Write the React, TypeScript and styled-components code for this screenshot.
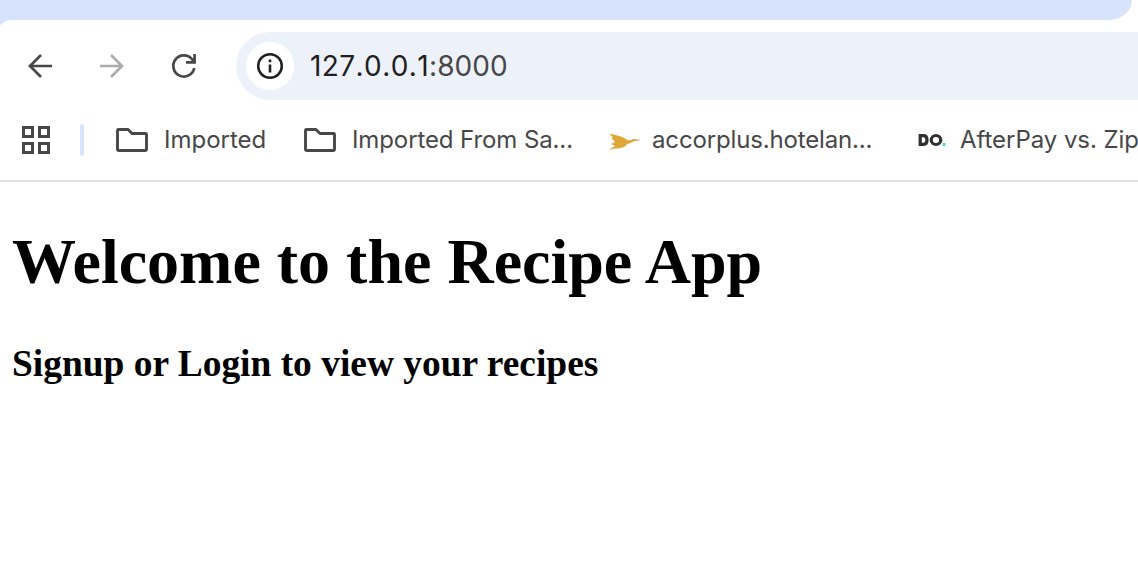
import React from "react";
import styled, { createGlobalStyle } from "styled-components";

const GlobalStyle = createGlobalStyle`
  * { box-sizing: border-box; }
  body { margin: 0; background: #fff; overflow: hidden; }
  svg { flex: none; }
`;

const Window = styled.div`
  width: 1138px;
  height: 580px;
  overflow: hidden;
  background: #fff;
`;

const TabStrip = styled.div`
  width: 1132px;
  height: 20px;
  background: #d7e2fb;
  border-bottom-right-radius: 24px 20px;
`;

const StripBase = styled.div`
  background: linear-gradient(to right, #d7e2fb 40px, #fff 40px);
`;

const Chrome = styled.div`
  height: 162px;
  margin-left: -4px;
  padding: 12px 0 0 4px;
  background: #fff;
  border-top-left-radius: 16px;
  border-bottom: 2px solid #e1e1e1;
`;

const Toolbar = styled.div`
  display: flex;
  align-items: center;
  height: 68px;
  padding-left: 22px;
`;

const NavButton = styled.button<{ $muted?: boolean }>`
  display: flex;
  width: 36px;
  height: 36px;
  margin-right: 36px;
  padding: 0;
  border: 0;
  background: none;
  color: ${(p) => (p.$muted ? "#ababab" : "#474747")};
`;

const AddressBar = styled.div`
  display: flex;
  align-items: center;
  flex: 1;
  height: 68px;
  margin-left: -2px;
  padding-left: 10px;
  border-radius: 34px 0 0 34px;
  background: #edf2fa;
`;

const SiteInfo = styled.div`
  display: flex;
  width: 48px;
  height: 48px;
  margin-right: 16px;
  border-radius: 50%;
  background: #fff;
`;

const Url = styled.span`
  font: 400 28px/34px Inter, "Liberation Sans", sans-serif;
  font-kerning: none;
  font-feature-settings: "calt" 0;
  letter-spacing: 0.42px;
  color: #1f1f1f;
  white-space: nowrap;
`;

const Port = styled.span`
  letter-spacing: 0.05px;
  color: #474747;
`;

const Bookmarks = styled.div`
  display: flex;
  align-items: center;
  height: 80px;
  padding-left: 20px;
`;

const Divider = styled.div`
  flex: none;
  width: 4px;
  height: 32px;
  margin: 0 32px 0 28px;
  border-radius: 2px;
  background: #d7e2fb;
`;

const Bookmark = styled.div<{ $width: number; $gap?: number }>`
  display: flex;
  align-items: center;
  flex: none;
  width: ${(p) => p.$width}px;
  gap: ${(p) => p.$gap ?? 16}px;
`;

const Label = styled.span<{ $spacing: number }>`
  font: 400 24px/30px Inter, "Liberation Sans", sans-serif;
  letter-spacing: ${(p) => p.$spacing}px;
  color: #474747;
  white-space: nowrap;
`;

const Page = styled.main`
  padding: 38px 12px 0;
  font-family: "Liberation Serif", "Times New Roman", serif;
  color: #000;
`;

const Title = styled.h1`
  margin: 5px 0 0;
  font-size: 64px;
  line-height: 74px;
`;

const Subtitle = styled.h3`
  margin: 44px 0 0;
  font-size: 37.44px;
  line-height: 42px;
`;

const FolderIcon = () => (
  <svg width="32" height="32" viewBox="0 0 32 32" fill="none" stroke="#474747" strokeWidth="2.900" strokeLinejoin="round">
    <path d="M1.500 6.500q0-1 1-1h9.500l4 4h13.500q1 0 1 1v15q0 1-1 1h-27q-1 0-1-1z" />
  </svg>
);

const BirdIcon = () => (
  <svg width="32" height="32" viewBox="0 0 32 32">
    <path
      d="M1 9.800l3.500.4L12 12.200c3 .8 5 2 6.800 3.600 1.600.7 3 .6 4.200.3l2.500-1.200 6 .5v1.200l-5 .5-4 1.900c-2.500.4-3.500 1.200-4.500 2.500-1.500 1.500-4 2.400-6.500 2.700-4.500.2-7 .6-10.500 1.600 1-1.500 2.500-2 4.500-2.600l1.500-1.500L3 20l4-1.800C6 16.500 4.500 15 3 14l2-.4C4.500 12.500 2.500 11.200 1 9.800z"
      fill="#dea637"
    />
  </svg>
);

const DoIcon = () => (
  <svg width="28" height="32" viewBox="0 0 28 32" fill="none">
    <path d="M2.200 11.700h3.300q3.500 0 3.500 4.300t-3.500 4.300H2.200z" stroke="#303030" strokeWidth="3.200" />
    <ellipse cx="18" cy="16" rx="4.800" ry="4.500" stroke="#303030" strokeWidth="3.200" />
    <rect x="24.500" y="19" width="3" height="3" fill="#58d3d8" />
  </svg>
);

export default function App() {
  return (
    <Window>
      <GlobalStyle />
      <TabStrip />
      <StripBase>
        <Chrome>
          <Toolbar>
            <NavButton aria-label="Back">
              <svg width="36" height="36" viewBox="0 0 36 36" fill="none" stroke="currentColor" strokeWidth="2.700">
                <path d="M30 18H8M19 7 8 18l11 11" />
              </svg>
            </NavButton>
            <NavButton aria-label="Forward" $muted>
              <svg width="36" height="36" viewBox="0 0 36 36" fill="none" stroke="currentColor" strokeWidth="2.700">
                <path d="M6 18h22M17 7l11 11-11 11" />
              </svg>
            </NavButton>
            <NavButton aria-label="Reload">
              <svg width="36" height="36" viewBox="0 0 36 36" fill="none" stroke="currentColor" strokeWidth="2.700">
                <path d="M28.300 20A10.600 10.600 0 1 1 26 11.100l2.500 3M28.600 6v8.300H20" />
              </svg>
            </NavButton>
            <AddressBar>
              <SiteInfo>
                <svg width="48" height="48" viewBox="0 0 48 48" fill="none" stroke="#1f1f1f">
                  <circle cx="24" cy="24" r="11.800" strokeWidth="2.500" />
                  <path d="M24 22.500v8M24 17.500v2.700" strokeWidth="2.600" />
                </svg>
              </SiteInfo>
              <Url>
                127.0.0.1<Port>:8000</Port>
              </Url>
            </AddressBar>
          </Toolbar>
          <Bookmarks>
            <svg width="32" height="32" viewBox="0 0 32 32" fill="none" stroke="#474747" strokeWidth="3">
              <path d="M3.500 3.500h9v9h-9zM19.500 3.500h9v9h-9zM3.500 19.500h9v9h-9zM19.500 19.500h9v9h-9z" />
            </svg>
            <Divider />
            <Bookmark $width={188}>
              <FolderIcon />
              <Label $spacing={0}>Imported</Label>
            </Bookmark>
            <Bookmark $width={304}>
              <FolderIcon />
              <Label $spacing={-0.1}>Imported From Sa...</Label>
            </Bookmark>
            <Bookmark $width={310} $gap={12}>
              <BirdIcon />
              <Label $spacing={-0.15}>accorplus.hotelan...</Label>
            </Bookmark>
            <Bookmark $width={300} $gap={14}>
              <DoIcon />
              <Label $spacing={-0.05}>AfterPay vs. Zip</Label>
            </Bookmark>
          </Bookmarks>
        </Chrome>
      </StripBase>
      <Page>
        <Title>Welcome to the Recipe App</Title>
        <Subtitle>Signup or Login to view your recipes</Subtitle>
      </Page>
    </Window>
  );
}
